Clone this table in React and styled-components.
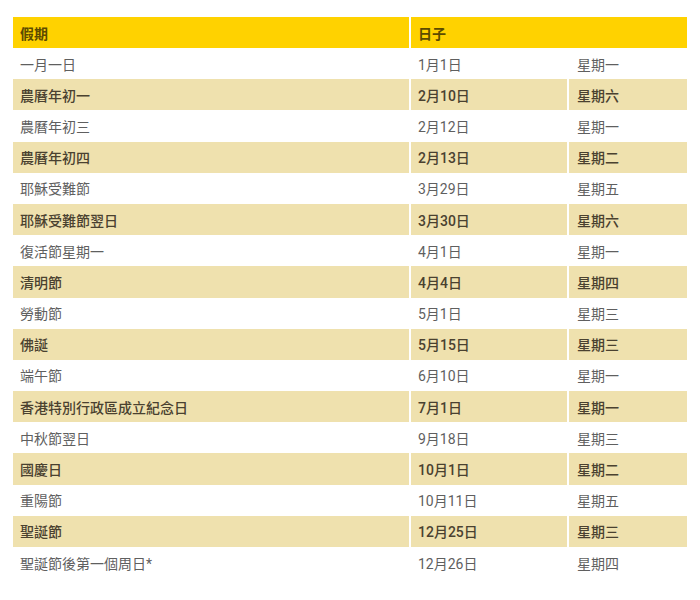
import React from "react";
import styled, { createGlobalStyle } from "styled-components";

const holidays = [
  ["一月一日", "1月1日", "星期一"],
  ["農曆年初一", "2月10日", "星期六"],
  ["農曆年初三", "2月12日", "星期一"],
  ["農曆年初四", "2月13日", "星期二"],
  ["耶穌受難節", "3月29日", "星期五"],
  ["耶穌受難節翌日", "3月30日", "星期六"],
  ["復活節星期一", "4月1日", "星期一"],
  ["清明節", "4月4日", "星期四"],
  ["勞動節", "5月1日", "星期三"],
  ["佛誕", "5月15日", "星期三"],
  ["端午節", "6月10日", "星期一"],
  ["香港特別行政區成立紀念日", "7月1日", "星期一"],
  ["中秋節翌日", "9月18日", "星期三"],
  ["國慶日", "10月1日", "星期二"],
  ["重陽節", "10月11日", "星期五"],
  ["聖誕節", "12月25日", "星期三"],
  ["聖誕節後第一個周日*", "12月26日", "星期四"],
];

const GlobalStyle = createGlobalStyle`
  body {
    margin: 0;
    background: #ffffff;
    font-family: Roboto, "Noto Sans CJK TC", sans-serif;
  }
`;

const Wrapper = styled.div`
  padding: 17px 13px 0 13px;
`;

const Table = styled.table`
  width: 674px;
  border-collapse: separate;
  border-spacing: 0;
  table-layout: fixed;
`;

const HeadCell = styled.th`
  background: #ffd200;
  color: #5c4b00;
  font-size: 14px;
  font-weight: 700;
  text-align: left;
  height: 31px;
  padding: 0 7px;
  box-sizing: border-box;
  border-right: ${(p) => (p.$last ? "none" : "2px solid #fff")};
`;

const Row = styled.tr`
  background: ${(p) => (p.$shaded ? "#efe1ae" : "#ffffff")};
`;

const Cell = styled.td`
  height: 31.2px;
  padding: 0 7px;
  box-sizing: border-box;
  font-size: 14px;
  font-weight: ${(p) => (p.$shaded ? 500 : 400)};
  color: ${(p) => (p.$shaded ? "#4a4130" : "#5f5f5f")};
  border-right: ${(p) => (p.$last ? "none" : "2px solid #fff")};
  white-space: nowrap;
  padding-left: ${(p) => (p.$wide ? "8px" : "7px")};
`;

export default function App() {
  return (
    <Wrapper>
      <GlobalStyle />
      <Table>
        <colgroup>
          <col style={{ width: 398 }} />
          <col style={{ width: 158 }} />
          <col style={{ width: 118 }} />
        </colgroup>
        <thead>
          <tr>
            <HeadCell>假期</HeadCell>
            <HeadCell colSpan={2} $last>
              日子
            </HeadCell>
          </tr>
        </thead>
        <tbody>
          {holidays.map(([name, date, day], i) => {
            const shaded = i % 2 === 1;
            return (
              <Row key={name} $shaded={shaded}>
                <Cell $shaded={shaded}>{name}</Cell>
                <Cell $shaded={shaded}>{date}</Cell>
                <Cell $shaded={shaded} $last $wide>
                  {day}
                </Cell>
              </Row>
            );
          })}
        </tbody>
      </Table>
    </Wrapper>
  );
}
